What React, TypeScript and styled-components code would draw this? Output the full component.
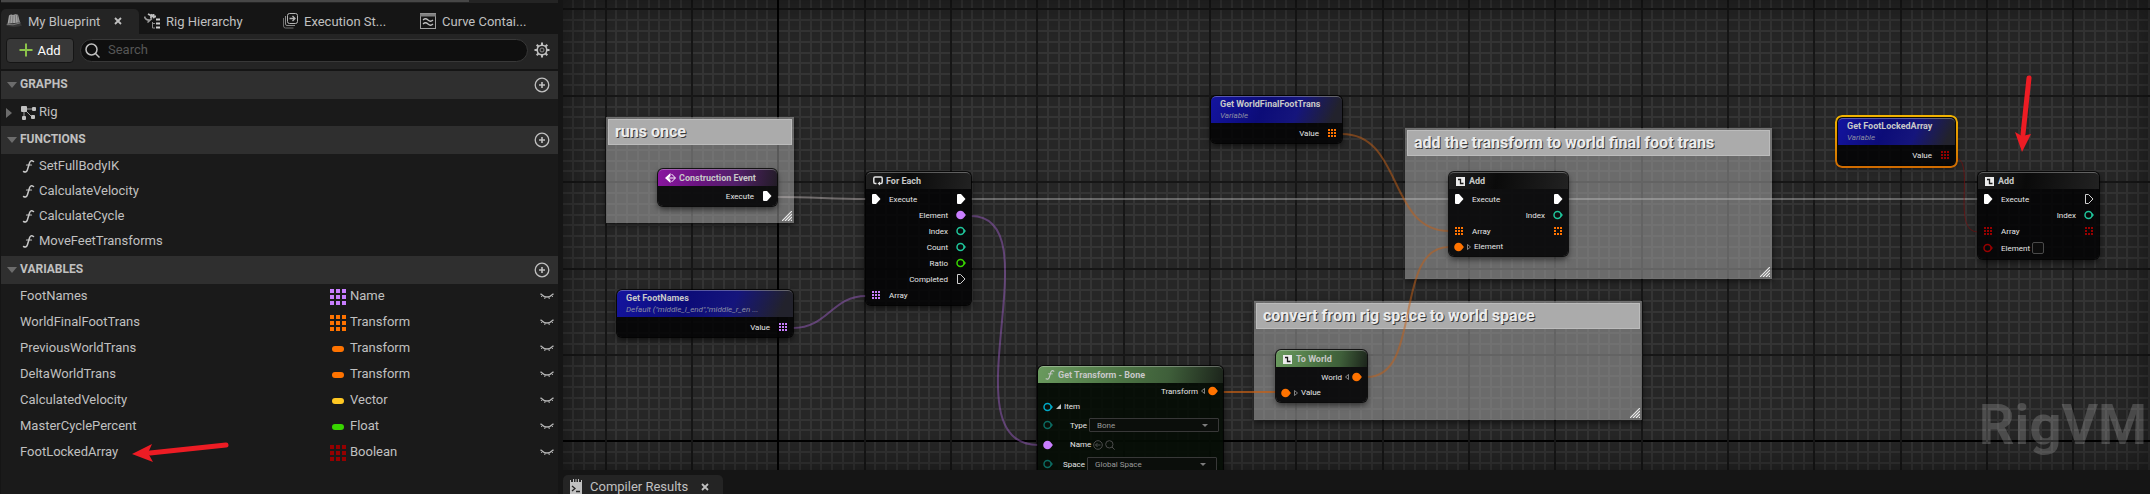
import React from 'react';
import styled, { createGlobalStyle, css } from 'styled-components';

const Global = createGlobalStyle`
  *, *::before, *::after { box-sizing: border-box; }
  body { margin: 0; background: #151515; font-family: Roboto, "Liberation Sans", sans-serif; }
  button, input, select { font: inherit; color: inherit; margin: 0; }
`;

/* ---------- palette ---------- */
const C = {
  name: '#c97eff',
  transform: '#ff7300',
  vector: '#ffc823',
  float: '#38d500',
  bool: '#960000',
  int: '#1fc49a',
  item: '#00a8c6',
  enumeration: '#0b6a60',
};

/* ---------- page frame ---------- */
const Page = styled.div`
  position: relative;
  display: grid;
  grid-template-columns: 558px minmax(0, 1fr);
  column-gap: 5px;
  min-height: 100vh;
  background: #151515;
  overflow: hidden;
`;
const Sidebar = styled.aside`
  display: flex;
  flex-direction: column;
  min-width: 0;
  padding-left: 1px;
  color: #c0c0c0;
  font-size: 13px;
`;
const ScrollStrip = styled.div`
  height: 3px;
  background: #242424;
  margin-bottom: 6px;
`;
const ScrollThumb = styled.div`
  width: 84%;
  height: 2px;
  background: #474747;
`;
const Tabs = styled.nav`
  display: grid;
  grid-template-columns: repeat(4, 138px);
  height: 25px;
`;
const Tab = styled.button<{ $active?: boolean }>`
  display: flex;
  align-items: center;
  gap: 6px;
  height: 25px;
  padding: 0 5px 1px;
  border: 0;
  border-radius: 5px 5px 0 0;
  background: ${(p) => (p.$active ? '#242424' : 'transparent')};
  color: #c0c0c0;
  font-size: 13px;
  white-space: nowrap;
`;
const Close = styled.span<{ $gap: number }>`
  display: flex;
  margin-left: ${(p) => p.$gap}px;
`;
const Toolbar = styled.div`
  display: flex;
  align-items: center;
  gap: 6px;
  height: 35px;
  padding: 0 8px 3px 5px;
  background: #242424;
`;
const AddButton = styled.button`
  display: flex;
  align-items: center;
  justify-content: center;
  gap: 4px;
  width: 68px;
  height: 25px;
  padding: 0;
  border: 1px solid #151515;
  border-radius: 4px;
  background: #383838;
  color: #fff;
`;
const SearchBox = styled.label`
  display: flex;
  flex: 1;
  align-items: center;
  gap: 8px;
  height: 23px;
  padding: 0 4px;
  border: 1px solid #383838;
  border-radius: 12px;
  background: #0f0f0f;
`;
const SearchInput = styled.input`
  flex: 1;
  min-width: 0;
  padding: 0 0 1px;
  border: 0;
  outline: 0;
  background: transparent;
  font-size: 13px;
  &::placeholder { color: #565656; opacity: 1; }
`;
const IconButton = styled.button`
  display: flex;
  align-items: center;
  justify-content: center;
  width: 16px;
  height: 16px;
  padding: 0;
  border: 0;
  background: none;
  color: #c0c0c0;
`;
const Tree = styled.div`
  flex: 1;
  margin-top: 2px;
  background: #1a1a1a;
`;
const SectionHead = styled.h2`
  display: flex;
  align-items: center;
  gap: 3px;
  height: 28px;
  margin: 0;
  padding: 0 8px 0 6px;
  background: #2f2f2f;
  font-size: 12px;
  font-weight: 700;
`;
const HeadLabel = styled.span`
  flex: 1;
  padding-bottom: 2px;
`;
const Label = styled.span`
  padding-bottom: 2px;
`;
const TreeList = styled.ul<{ $after?: number }>`
  margin: 0;
  padding: 0 0 ${(p) => p.$after ?? 0}px;
  list-style: none;
`;
const TreeRow = styled.li<{ $h: number; $indent: number }>`
  display: flex;
  align-items: center;
  height: ${(p) => p.$h}px;
  padding-left: ${(p) => p.$indent}px;
`;
const RowIcon = styled.span<{ $w: number }>`
  display: flex;
  width: ${(p) => p.$w}px;
`;
const VarTable = styled.table`
  width: 100%;
  border-collapse: collapse;
  table-layout: fixed;
`;
const VarRow = styled.tr`
  height: 26px;
`;
const VarCell = styled.td<{ $w?: number }>`
  width: ${(p) => (p.$w ? `${p.$w}px` : 'auto')};
  padding: 0 0 1px;
  vertical-align: middle;
  &:first-child { padding: 0 0 3px 19px; }
`;
const TypeCell = styled.span`
  display: flex;
  align-items: center;
  gap: 4px;
`;

/* ---------- graph ---------- */
const Main = styled.main`
  display: flex;
  flex-direction: column;
  min-width: 0;
`;
const Canvas = styled.section`
  position: relative;
  flex: 1;
  min-height: 400px;
  overflow: hidden;
  background: #262626;
`;
const Layer = styled.svg`
  position: absolute;
  inset: 0;
  width: 100%;
  height: 100%;
  pointer-events: none;
`;
const Vignette = styled.div`
  position: absolute;
  inset: 0;
  box-shadow: inset 0 0 44px rgba(0, 0, 0, 0.5);
  pointer-events: none;
`;
const Watermark = styled.div`
  position: absolute;
  right: 3px;
  bottom: 17px;
  color: rgba(255, 255, 255, 0.18);
  font-size: 56px;
  font-weight: 700;
  line-height: 56px;
`;
const Comment = styled.section<{ $x: number; $y: number; $w: number; $h: number }>`
  position: absolute;
  left: ${(p) => p.$x}px;
  top: ${(p) => p.$y}px;
  width: ${(p) => p.$w}px;
  height: ${(p) => p.$h}px;
  display: flex;
  flex-direction: column;
  justify-content: space-between;
  align-items: flex-end;
  padding: 2px;
  background: rgba(170, 170, 170, 0.52);
  box-shadow: 0 2px 6px rgba(0, 0, 0, 0.6);
`;
const CommentTitle = styled.h3`
  width: 100%;
  height: 26px;
  margin: 0;
  padding: 0 6px;
  border: 1px solid #bcbcbc;
  background: #ababab;
  color: #ececec;
  font-size: 16px;
  font-weight: 700;
  line-height: 24px;
  text-shadow: 1px 1px 0 #3a3a3a;
  white-space: nowrap;
`;
type Tone = 'event' | 'variable' | 'pure' | 'flow';
const tones: Record<Tone, string> = {
  event: 'linear-gradient(100deg, #8a17a0 0%, #6a1480 35%, #53206a 65%, #221c26 100%)',
  variable: 'linear-gradient(115deg, #1414a0 0%, #0c0c78 40%, #15157c 65%, #22222c 92%)',
  pure: 'linear-gradient(100deg, #6a9a5e 0%, #4c7444 45%, #3f5f3a 70%, #1c241b 100%)',
  flow: 'linear-gradient(100deg, #202020 0%, #0a0a0a 40%, #161616 70%, #222 100%)',
};
const NodeBox = styled.article<{ $x: number; $y: number; $w: number; $selected?: boolean; $green?: boolean }>`
  position: absolute;
  left: ${(p) => p.$x}px;
  top: ${(p) => p.$y}px;
  width: ${(p) => p.$w}px;
  overflow: hidden;
  border-radius: 5px;
  background: ${(p) => (p.$green ? 'rgba(4, 12, 4, 0.9)' : 'rgba(4, 4, 6, 0.9)')};
  box-shadow: 0 0 0 1px rgba(0, 0, 0, 0.8), 0 3px 6px rgba(0, 0, 0, 0.6);
  color: #e6e6e6;
  font-size: 8px;
  ${(p) =>
    p.$selected &&
    css`
      overflow: visible;
      &::before {
        content: '';
        position: absolute;
        inset: -3px;
        border-radius: 7px;
        padding: 2px;
        background: linear-gradient(#f2b400, #cf6a00);
        mask: linear-gradient(#000 0 0) content-box exclude, linear-gradient(#000 0 0);
      }
    `}
`;
const NodeHead = styled.header<{ $tone: Tone; $tall?: boolean }>`
  display: flex;
  align-items: center;
  gap: 3px;
  height: ${(p) => (p.$tall ? 27 : 17)}px;
  padding: 0 ${(p) => (p.$tall ? 9 : 7)}px;
  border-top: 1px solid rgba(255, 255, 255, 0.3);
  border-radius: 5px 5px 0 0;
  background: ${(p) => tones[p.$tone]};
`;
const Titles = styled.div`
  display: flex;
  flex-direction: column;
  min-width: 0;
`;
const NodeTitle = styled.h4`
  margin: 0;
  color: #c8c8c8;
  font-size: 9px;
  font-weight: 700;
  line-height: 11px;
  white-space: nowrap;
`;
const NodeSub = styled.p`
  margin: 0;
  color: #8c8ea4;
  font-size: 8px;
  font-style: italic;
  line-height: 12px;
  white-space: nowrap;
`;
const NodeBody = styled.div<{ $tight?: boolean }>`
  padding: ${(p) => (p.$tight ? 0 : 2)}px 5px 2px;
`;
const PinRow = styled.div<{ $h?: number }>`
  display: flex;
  align-items: center;
  justify-content: space-between;
  height: ${(p) => p.$h ?? 16}px;
`;
const PinSide = styled.div<{ $gap?: number }>`
  display: flex;
  align-items: center;
  gap: ${(p) => p.$gap ?? 8}px;
`;
const PinValue = styled.label<{ $indent?: number }>`
  display: flex;
  align-items: center;
  gap: 2px;
  padding-left: ${(p) => p.$indent ?? 0}px;
`;
const SelectWrap = styled.span`
  position: relative;
  display: flex;
  svg { position: absolute; right: 11px; top: 6px; }
`;
const NodeSelect = styled.select`
  width: 130px;
  height: 14px;
  padding: 0 7px;
  appearance: none;
  border: 1px solid #383838;
  border-radius: 1px;
  background: #0b0e0b;
  color: #9a9a9a;
  font-size: 8px;
`;
const PinCheck = styled.input`
  appearance: none;
  width: 12px;
  height: 12px;
  border: 1px solid #4a4a4a;
  border-radius: 2px;
  background: #0c0c0c;
`;
const BottomBar = styled.footer`
  height: 24px;
  padding-top: 5px;
`;
const BottomTab = styled.button`
  display: flex;
  align-items: center;
  gap: 8px;
  width: 160px;
  height: 19px;
  padding: 4px 7px 0;
  overflow: hidden;
  border: 0;
  border-radius: 5px 5px 0 0;
  background: #242424;
  color: #c0c0c0;
  font-size: 13px;
  white-space: nowrap;
`;

/* ---------- icons ---------- */
const CrossIcon = () => (
  <svg width="8" height="8" viewBox="0 0 8 8" aria-hidden>
    <path d="M1 1l6 6M7 1L1 7" stroke="#c0c0c0" strokeWidth="1.8" />
  </svg>
);
const BookIcon = () => (
  <svg width="16" height="16" viewBox="0 0 16 16" aria-hidden>
    <path d="M3 2.500Q5 .8 7 2q2.500-1.300 5-.2L14 9.500 1.500 11z" fill="#a2a2a2" />
    <path d="M4.800 2.500l-1 8M7 2.500l-.4 8M9.300 2l.4 8M11.300 2l1 7.500" stroke="#6c6c6c" strokeWidth=".8" />
    <path d="M0 11l14-1.500 2 3-3.500 1-4.500.5L1 13z" fill="#383838" />
    <path d="M.8 11.300L7 11.800l7.500-2" stroke="#8a8a8a" strokeWidth=".8" fill="none" />
  </svg>
);
const HierarchyIcon = () => (
  <svg width="16" height="16" viewBox="0 0 16 16" aria-hidden>
    <path d="M4 1l3 1.500v3M7 1.500L10.500 5M9.500 1v2.500H12" stroke="#c0c0c0" strokeWidth="1.800" fill="none" />
    <path d="M.5 3.500q1 4 5.500 3.500M3.500 9.500L8 5.500" stroke="#9c9c9c" strokeWidth="1.500" fill="none" />
    <path d="M8.500 9v6H11M8.500 10.500H11" stroke="#8c8c8c" fill="none" />
    <path d="M12 6.500h4M12 10.500h4M12 14.500h4" stroke="#d0d0d0" strokeWidth="2" />
  </svg>
);
const StackIcon = () => (
  <svg width="16" height="16" viewBox="0 0 16 16" fill="none" stroke="#b4b4b4" aria-hidden>
    <rect x="5.500" y=".5" width="10" height="10" rx="2" />
    <path d="M3.500 3v8q0 1.500 1.500 1.500h8" stroke="#8c8c8c" />
    <path d="M1.500 5v8q0 2 2 2h8" stroke="#6e6e6e" />
    <path d="M7.500 5.500h5M10.500 3l2.500 2.500L10.500 8" strokeWidth="1.300" />
  </svg>
);
const CurveIcon = () => (
  <svg width="16" height="16" viewBox="0 0 16 16" fill="none" stroke="#a0a0a0" aria-hidden>
    <rect x=".5" y=".5" width="15" height="15" />
    <path d="M0 2h16" strokeWidth="3" stroke="#808080" />
    <path d="M3 7q2.500-2.500 5 0t5 0M3 11q2.500-2.500 5 0t5 0" strokeWidth="1.200" stroke="#c0c0c0" />
  </svg>
);
const PlusIcon = () => (
  <svg width="14" height="14" viewBox="0 0 14 14" aria-hidden>
    <path d="M7 .5v13M.5 7h13" stroke="#8bc34a" strokeWidth="2" />
  </svg>
);
const SearchIcon = ({ size = 15, color = '#c0c0c0' }: { size?: number; color?: string }) => (
  <svg width={size} height={size} viewBox="0 0 15 15" fill="none" stroke={color} strokeWidth="1.500" aria-hidden>
    <circle cx="6.500" cy="6.500" r="5.500" />
    <path d="M10.500 10.500l4 4" />
  </svg>
);
const GearIcon = () => (
  <svg width="16" height="16" viewBox="-8 -8 16 16" fill="none" stroke="#c0c0c0" aria-hidden>
    <circle r="4.800" strokeWidth="1.600" />
    <circle r="2" stroke="#8c8c8c" />
    {[0, 45, 90, 135, 180, 225, 270, 315].map((a) => (
      <path key={a} d="M0-5v-2.500" strokeWidth="2" transform={`rotate(${a})`} />
    ))}
  </svg>
);
const CirclePlus = () => (
  <svg width="16" height="16" viewBox="0 0 16 16" fill="none" stroke="#c0c0c0" aria-hidden>
    <circle cx="8" cy="8" r="6.800" strokeWidth="1.300" />
    <path d="M8 5v6M5 8h6" strokeWidth="1.600" />
  </svg>
);
const Down = () => (
  <svg width="10" height="6" viewBox="0 0 10 6" aria-hidden>
    <path d="M0 0h10L5 6z" fill="#6c6c6c" />
  </svg>
);
const RightTri = () => (
  <svg width="6" height="10" viewBox="0 0 6 10" aria-hidden>
    <path d="M0 0v10l6-5z" fill="#6c6c6c" />
  </svg>
);
const RigIcon = () => (
  <svg width="15" height="14" viewBox="0 0 15 14" fill="#c0c0c0" aria-hidden>
    <path d="M3 4v7M5 3h6M5 5l5 5" stroke="#a0a0a0" />
    <rect width="6" height="6" rx="1" />
    <rect x="11" y="1" width="4" height="4" rx="1" />
    <rect x="1" y="10" width="4" height="4" rx="1" />
    <rect x="10" y="9" width="4" height="4" rx="1" />
  </svg>
);
const FuncIcon = ({ size = 13 }: { size?: number }) => (
  <svg width={size} height={size} viewBox="0 0 13 13" fill="none" stroke="#c8c8c8" strokeLinecap="round" aria-hidden>
    <path d="M11.500 1.500Q8.500-.5 7.500 3L5.500 9.500Q4.500 13 1.500 11.500" strokeWidth="1.500" />
    <path d="M4.500 5h5" strokeWidth="1.200" />
  </svg>
);
const LashIcon = () => (
  <svg width="14" height="7" viewBox="0 0 14 7" fill="none" stroke="#b4b4b4" aria-hidden>
    <path d="M.5.800q6.500 6.500 13 0" strokeWidth="1.300" />
    <path d="M2.500 2.500L1.200 4M5.200 4L4.700 6M8.800 4l.5 2M11.500 2.500L12.800 4" />
  </svg>
);
const ArrayGlyph = ({ color }: { color: string }) => (
  <svg width="16" height="16" viewBox="0 0 16 16" fill={color} aria-hidden>
    {[0, 6, 12].map((y) => [0, 6, 12].map((x) => <rect key={`${x}${y}`} x={x} y={y} width="4" height="4" />))}
  </svg>
);
const PillGlyph = ({ color }: { color: string }) => (
  <svg width="16" height="16" viewBox="0 0 16 16" fill={color} aria-hidden>
    <rect x="2" y="5" width="12" height="6" rx="3" />
  </svg>
);

type PinKind = 'exec' | 'execOpen' | 'dot' | 'ring' | 'array' | 'arrayOpen';
const Pin = ({ kind, color = '#fff' }: { kind: PinKind; color?: string }) => (
  <svg width="10" height="10" viewBox="0 0 10 10" aria-hidden>
    {kind === 'exec' && <path d="M1 1Q1 0 2 0h3l4.500 5L5 10H2Q1 10 1 9z" fill="#fff" />}
    {kind === 'execOpen' && <path d="M1.500.5h3L9 5 4.500 9.500h-3z" fill="none" stroke="#d0d0d0" />}
    {kind === 'dot' && (
      <g fill={color}>
        <circle cx="4.500" cy="5" r="4.300" />
        <path d="M8 3l2 2-2 2z" />
      </g>
    )}
    {kind === 'ring' && (
      <g fill={color}>
        <circle cx="4.500" cy="5" r="3.500" fill="none" stroke={color} strokeWidth="1.500" />
        <path d="M8 3l2 2-2 2z" />
      </g>
    )}
    {(kind === 'array' || kind === 'arrayOpen') &&
      [1, 4, 7].map((y) =>
        [1, 4, 7].map((x) =>
          kind === 'arrayOpen' && x === 4 && y === 4 ? null : (
            <rect key={`${x}${y}`} x={x} y={y} width="2" height="2" fill={color} />
          ),
        ),
      )}
  </svg>
);
const Chevron = ({ flip }: { flip?: boolean }) => (
  <svg width="4" height="6" viewBox="0 0 4 6" aria-hidden>
    <path d={flip ? 'M3.500.5v5L.5 3z' : 'M.5.5v5l3-2.500z'} fill="none" stroke="#a0a0a0" strokeWidth=".8" />
  </svg>
);
const EventIcon = () => (
  <svg width="11" height="10" viewBox="0 0 11 10" aria-hidden>
    <path d="M5.500 0L0 5l5.500 5V7L3.500 5l2-2z" fill="#fff" />
    <path d="M6.500 1L10.500 5l-4 4M4 5h6" fill="none" stroke="#fff" />
  </svg>
);
const LoopIcon = () => (
  <svg width="10" height="10" viewBox="0 0 10 10" fill="none" stroke="#e4e4e4" strokeWidth="1.500" aria-hidden>
    <path d="M3.500 7.500H2Q.8 7.500.8 6V2.500Q.8 1 2 1h6q1.200 0 1.200 1.500V6q0 1.500-1.200 1.500H6" />
    <path d="M7 5.500v4l-2.500-2z" fill="#e4e4e4" stroke="none" />
  </svg>
);
const NodeIcon = () => (
  <svg width="10" height="9" viewBox="0 0 10 9" aria-hidden>
    <rect width="9" height="9" fill="#ececec" />
    <path d="M2 2.500h2.500v4H7.500" stroke="#1a1a1a" strokeWidth="1.300" fill="none" />
  </svg>
);
const ConsoleIcon = () => (
  <svg width="12" height="16" viewBox="0 0 12 16" aria-hidden>
    <path d="M0 1h1v2h2V0h1v3h1.500V0h1v3H8V0h1v3h2V1h1v15H0z" fill="#c0c0c0" />
    <path d="M2 7l3 2.500L2 12M6 12.500h4" stroke="#242424" strokeWidth="1.300" fill="none" />
  </svg>
);
const SmallDown = () => (
  <svg width="6" height="3" viewBox="0 0 6 3" aria-hidden>
    <path d="M0 0h6L3 3z" fill="#7c7c7c" />
  </svg>
);

/* ---------- graph background ---------- */
const STEP = 86.35 / 8;
const AXIS_X = 214;
const AXIS_Y = 440;
const indices = (from: number, to: number) => Array.from({ length: to - from }, (_, i) => from + i);
const Grid = () => {
  const cols = indices(-20, 280);
  const rows = indices(-48, 80);
  const place = (origin: number, i: number) => Math.round(origin + i * STEP + 0.2);
  return (
    <Layer aria-hidden>
      {cols.filter((i) => i % 8).map((i) => (
        <rect key={`c${i}`} x={place(AXIS_X, i)} width="2" height="100%" fill="#343434" />
      ))}
      {rows.filter((i) => i % 8).map((i) => (
        <rect key={`r${i}`} y={place(AXIS_Y, i)} height="2" width="100%" fill="#343434" />
      ))}
      {rows.filter((i) => i % 8 === 0).map((i) => (
        <rect key={`R${i}`} y={place(AXIS_Y, i)} height="2" width="100%" fill={i ? '#161616' : '#000'} />
      ))}
      {cols.filter((i) => i % 8 === 0).map((i) => (
        <rect key={`C${i}`} x={place(AXIS_X, i)} width="2" height="100%" fill={i ? '#161616' : '#000'} />
      ))}
    </Layer>
  );
};

const wires = [
  { d: 'M214 197C250 197 268 199 303 199', color: 'rgba(200,190,190,.45)', w: 2 },
  { d: 'M408 199H886', color: 'rgba(200,200,200,.4)', w: 2 },
  { d: 'M1005 199H1415', color: 'rgba(200,200,200,.4)', w: 2 },
  { d: 'M408 216C492 216 382 445 475 445', color: 'rgba(150,90,190,.5)', w: 2 },
  { d: 'M230 328C265 328 269 296 303 296', color: 'rgba(150,90,190,.5)', w: 2 },
  { d: 'M779 134C840 134 825 231 886 231', color: 'rgba(200,95,20,.5)', w: 2 },
  { d: 'M804 377C860 377 830 247 886 247', color: 'rgba(200,95,20,.5)', w: 2 },
  { d: 'M660 392H713', color: 'rgba(200,95,20,.7)', w: 2 },
  { d: 'M1394 158C1412 164 1388 232 1415 232', color: 'rgba(130,10,10,.6)', w: 1 },
];

/* ---------- data ---------- */
const functions = ['SetFullBodyIK', 'CalculateVelocity', 'CalculateCycle', 'MoveFeetTransforms'];
const variables = [
  { name: 'FootNames', type: 'Name', color: C.name, array: true },
  { name: 'WorldFinalFootTrans', type: 'Transform', color: C.transform, array: true },
  { name: 'PreviousWorldTrans', type: 'Transform', color: C.transform },
  { name: 'DeltaWorldTrans', type: 'Transform', color: C.transform },
  { name: 'CalculatedVelocity', type: 'Vector', color: C.vector },
  { name: 'MasterCyclePercent', type: 'Float', color: C.float },
  { name: 'FootLockedArray', type: 'Boolean', color: C.bool, array: true },
];

const Section = ({ title }: { title: string }) => (
  <SectionHead>
    <Down />
    <HeadLabel>{title}</HeadLabel>
    <IconButton aria-label={`Add to ${title}`}><CirclePlus /></IconButton>
  </SectionHead>
);

type PinProps = { kind: PinKind; color?: string; label?: string; cast?: boolean };
const InPin = ({ kind, color, label, cast }: PinProps) => (
  <PinSide $gap={cast ? 3 : undefined}>
    <Pin kind={kind} color={color} />
    {cast && <Chevron />}
    {label}
  </PinSide>
);
const OutPin = ({ kind, color, label, cast }: PinProps) => (
  <PinSide $gap={cast ? 3 : undefined}>
    {label}
    {cast && <Chevron flip />}
    <Pin kind={kind} color={color} />
  </PinSide>
);

const GetNode = (p: { x: number; y: number; w: number; title: string; sub: string; color: string; selected?: boolean }) => (
  <NodeBox $x={p.x} $y={p.y} $w={p.w} $selected={p.selected}>
    <NodeHead $tone="variable" $tall>
      <Titles>
        <NodeTitle>{p.title}</NodeTitle>
        <NodeSub>{p.sub}</NodeSub>
      </Titles>
    </NodeHead>
    <NodeBody>
      <PinRow><span /><OutPin kind="array" color={p.color} label="Value" /></PinRow>
    </NodeBody>
  </NodeBox>
);

const Resize = () => (
  <svg width="10" height="10" viewBox="0 0 10 10" stroke="#ececec" strokeWidth="1.200" aria-hidden>
    <path d="M0 10L10 0M3 10l7-7M6 10l4-4M9 10l1-1" />
  </svg>
);
const CommentBox = (p: { x: number; y: number; w: number; h: number; title: string }) => (
  <Comment $x={p.x} $y={p.y} $w={p.w} $h={p.h}>
    <CommentTitle>{p.title}</CommentTitle>
    <Resize />
  </Comment>
);

const SidebarArrow = styled.svg`
  position: absolute;
  left: 132px;
  top: 440px;
  pointer-events: none;
`;

export default function App() {
  return (
    <Page>
      <Global />
      <Sidebar>
        <ScrollStrip><ScrollThumb /></ScrollStrip>
        <Tabs>
          <Tab $active><BookIcon />My Blueprint<Close $gap={8}><CrossIcon /></Close></Tab>
          <Tab><HierarchyIcon />Rig Hierarchy</Tab>
          <Tab><StackIcon />Execution St...</Tab>
          <Tab><CurveIcon />Curve Contai...</Tab>
        </Tabs>
        <Toolbar>
          <AddButton><PlusIcon />Add</AddButton>
          <SearchBox>
            <SearchIcon />
            <SearchInput placeholder="Search" aria-label="Search" />
          </SearchBox>
          <IconButton aria-label="Settings"><GearIcon /></IconButton>
        </Toolbar>
        <Tree>
          <Section title="GRAPHS" />
          <TreeList>
            <TreeRow $h={27} $indent={5}>
              <RowIcon $w={15}><RightTri /></RowIcon>
              <RowIcon $w={18}><RigIcon /></RowIcon>
              <Label>Rig</Label>
            </TreeRow>
          </TreeList>
          <Section title="FUNCTIONS" />
          <TreeList $after={2}>
            {functions.map((f) => (
              <TreeRow key={f} $h={25} $indent={21}>
                <RowIcon $w={17}><FuncIcon /></RowIcon>
                <Label>{f}</Label>
              </TreeRow>
            ))}
          </TreeList>
          <Section title="VARIABLES" />
          <VarTable>
            <tbody>
              {variables.map((v) => (
                <VarRow key={v.name}>
                  <VarCell $w={329}>{v.name}</VarCell>
                  <VarCell>
                    <TypeCell>
                      {v.array ? <ArrayGlyph color={v.color} /> : <PillGlyph color={v.color} />}
                      <Label>{v.type}</Label>
                    </TypeCell>
                  </VarCell>
                  <VarCell $w={19}>
                    <IconButton aria-label={`Show ${v.name}`}><LashIcon /></IconButton>
                  </VarCell>
                </VarRow>
              ))}
            </tbody>
          </VarTable>
        </Tree>
      </Sidebar>

      <Main>
        <Canvas>
          <Grid />
          <Vignette />
          <Watermark>RigVM</Watermark>
          <CommentBox x={43} y={117} w={188} h={106} title="runs once" />
          <CommentBox x={842} y={128} w={367} h={151} title="add the transform to world final foot trans" />
          <CommentBox x={691} y={301} w={388} h={119} title="convert from rig space to world space" />

          <Layer fill="none" aria-hidden>
            {wires.map((w) => <path key={w.d} d={w.d} stroke={w.color} strokeWidth={w.w} />)}
          </Layer>

          <NodeBox $x={95} $y={169} $w={119}>
            <NodeHead $tone="event"><EventIcon /><NodeTitle>Construction Event</NodeTitle></NodeHead>
            <NodeBody><PinRow><span /><OutPin kind="exec" label="Execute" /></PinRow></NodeBody>
          </NodeBox>

          <NodeBox $x={303} $y={172} $w={105}>
            <NodeHead $tone="flow"><LoopIcon /><NodeTitle>For Each</NodeTitle></NodeHead>
            <NodeBody>
              <PinRow><InPin kind="exec" label="Execute" /><OutPin kind="exec" /></PinRow>
              <PinRow><span /><OutPin kind="dot" color={C.name} label="Element" /></PinRow>
              <PinRow><span /><OutPin kind="ring" color={C.int} label="Index" /></PinRow>
              <PinRow><span /><OutPin kind="ring" color={C.int} label="Count" /></PinRow>
              <PinRow><span /><OutPin kind="ring" color={C.float} label="Ratio" /></PinRow>
              <PinRow><span /><OutPin kind="execOpen" label="Completed" /></PinRow>
              <PinRow><InPin kind="array" color={C.name} label="Array" /></PinRow>
            </NodeBody>
          </NodeBox>

          <GetNode x={54} y={290} w={176} title="Get FootNames" sub={'Default ("middle_l_end","middle_r_en ...'} color={C.name} />
          <GetNode x={648} y={96} w={131} title="Get WorldFinalFootTrans" sub="Variable" color={C.transform} />
          <GetNode x={1275} y={118} w={117} title="Get FootLockedArray" sub="Variable" color={C.bool} selected />

          <NodeBox $x={886} $y={172} $w={119}>
            <NodeHead $tone="flow"><NodeIcon /><NodeTitle>Add</NodeTitle></NodeHead>
            <NodeBody>
              <PinRow><InPin kind="exec" label="Execute" /><OutPin kind="exec" /></PinRow>
              <PinRow><span /><OutPin kind="ring" color={C.int} label="Index" /></PinRow>
              <PinRow><InPin kind="array" color={C.transform} label="Array" /><OutPin kind="arrayOpen" color={C.transform} /></PinRow>
              <PinRow $h={15}><InPin kind="dot" color={C.transform} label="Element" cast /></PinRow>
            </NodeBody>
          </NodeBox>

          <NodeBox $x={1415} $y={172} $w={121}>
            <NodeHead $tone="flow"><NodeIcon /><NodeTitle>Add</NodeTitle></NodeHead>
            <NodeBody>
              <PinRow><InPin kind="exec" label="Execute" /><OutPin kind="execOpen" /></PinRow>
              <PinRow><span /><OutPin kind="ring" color={C.int} label="Index" /></PinRow>
              <PinRow><InPin kind="array" color={C.bool} label="Array" /><OutPin kind="arrayOpen" color={C.bool} /></PinRow>
              <PinRow $h={18}>
                <PinSide>
                  <Pin kind="ring" color={C.bool} />
                  <PinValue>Element<PinCheck type="checkbox" /></PinValue>
                </PinSide>
              </PinRow>
            </NodeBody>
          </NodeBox>

          <NodeBox $x={713} $y={350} $w={91}>
            <NodeHead $tone="pure"><NodeIcon /><NodeTitle>To World</NodeTitle></NodeHead>
            <NodeBody>
              <PinRow><span /><OutPin kind="dot" color={C.transform} label="World" cast /></PinRow>
              <PinRow $h={15}><InPin kind="dot" color={C.transform} label="Value" cast /></PinRow>
            </NodeBody>
          </NodeBox>

          <NodeBox $x={475} $y={366} $w={185} $green>
            <NodeHead $tone="pure"><FuncIcon size={10} /><NodeTitle>Get Transform - Bone</NodeTitle></NodeHead>
            <NodeBody $tight>
              <PinRow><span /><OutPin kind="dot" color={C.transform} label="Transform" cast /></PinRow>
              <PinRow $h={15}>
                <PinSide $gap={3}>
                  <Pin kind="ring" color={C.item} />
                  <svg width="5" height="5" viewBox="0 0 5 5" aria-hidden><path d="M5 0v5H0z" fill="#c0c0c0" /></svg>
                  Item
                </PinSide>
              </PinRow>
              <PinRow $h={22}>
                <PinSide>
                  <Pin kind="ring" color={C.enumeration} />
                  <PinValue $indent={9}>
                    Type
                    <SelectWrap><NodeSelect><option>Bone</option></NodeSelect><SmallDown /></SelectWrap>
                  </PinValue>
                </PinSide>
              </PinRow>
              <PinRow $h={17}>
                <PinSide>
                  <Pin kind="dot" color={C.name} />
                  <PinValue as="span" $indent={9}>
                    Name
                    <svg width="10" height="10" viewBox="0 0 10 10" fill="none" stroke="#4c4c4c" aria-hidden>
                      <circle cx="5" cy="5" r="4.300" /><path d="M7.500 5H2.500M4.500 3l-2 2 2 2" />
                    </svg>
                    <SearchIcon size={10} color="#4c4c4c" />
                  </PinValue>
                </PinSide>
              </PinRow>
              <PinRow $h={22}>
                <PinSide>
                  <Pin kind="ring" color={C.enumeration} />
                  <PinValue $indent={2}>
                    Space
                    <SelectWrap><NodeSelect><option>Global Space</option></NodeSelect><SmallDown /></SelectWrap>
                  </PinValue>
                </PinSide>
              </PinRow>
            </NodeBody>
          </NodeBox>

          <Layer aria-hidden>
            <path d="M1466 78L1460 134" stroke="#ed1c24" strokeWidth="5" strokeLinecap="round" />
            <path d="M1452 132l7 4 9-2-9 18z" fill="#ed1c24" />
          </Layer>
        </Canvas>
        <BottomBar>
          <BottomTab><ConsoleIcon />Compiler Results<Close $gap={5}><CrossIcon /></Close></BottomTab>
        </BottomBar>
      </Main>
      <SidebarArrow width="100" height="24" viewBox="0 0 100 24" aria-hidden>
        <path d="M94 5L18 13" stroke="#ed1c24" strokeWidth="5" strokeLinecap="round" />
        <path d="M0 14L20 4l-4 9 5 9z" fill="#ed1c24" />
      </SidebarArrow>
    </Page>
  );
}
